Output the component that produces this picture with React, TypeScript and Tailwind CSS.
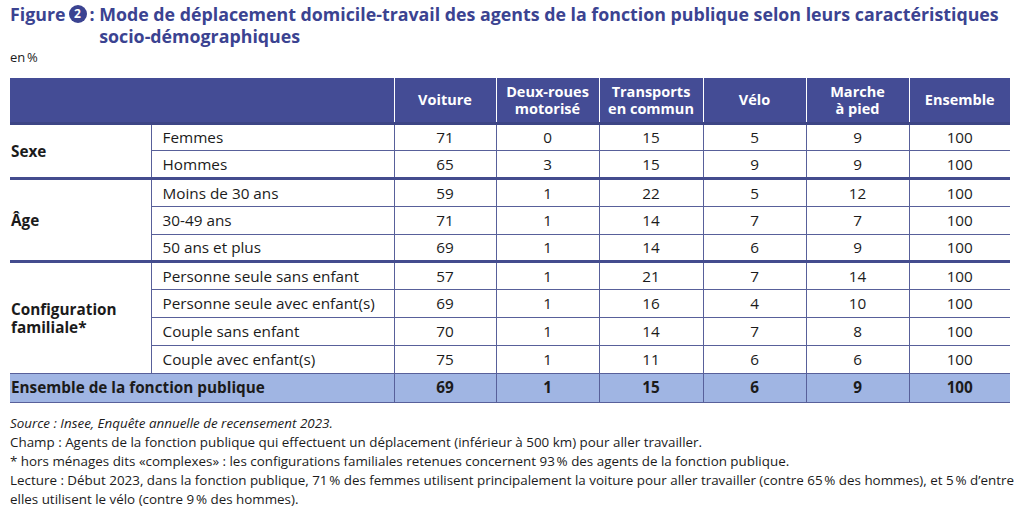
const font = "font-['Open_Sans','Lato',sans-serif]";

type Row = { label: string; values: number[] };
type Group = { name: string[]; rows: Row[] };

const groups: Group[] = [
  {
    name: ["Sexe"],
    rows: [
      { label: "Femmes", values: [71, 0, 15, 5, 9, 100] },
      { label: "Hommes", values: [65, 3, 15, 9, 9, 100] },
    ],
  },
  {
    name: ["Âge"],
    rows: [
      { label: "Moins de 30 ans", values: [59, 1, 22, 5, 12, 100] },
      { label: "30-49 ans", values: [71, 1, 14, 7, 7, 100] },
      { label: "50 ans et plus", values: [69, 1, 14, 6, 9, 100] },
    ],
  },
  {
    name: ["Configuration", "familiale*"],
    rows: [
      { label: "Personne seule sans enfant", values: [57, 1, 21, 7, 14, 100] },
      { label: "Personne seule avec enfant(s)", values: [69, 1, 16, 4, 10, 100] },
      { label: "Couple sans enfant", values: [70, 1, 14, 7, 8, 100] },
      { label: "Couple avec enfant(s)", values: [75, 1, 11, 6, 6, 100] },
    ],
  },
];

const headers = [
  ["Voiture"],
  ["Deux-roues", "motorisé"],
  ["Transports", "en commun"],
  ["Vélo"],
  ["Marche", "à pied"],
  ["Ensemble"],
];

const total = [69, 1, 15, 6, 9, 100];

// narrow no-break space before "%"
const nb = "\u202F";
const noteStar = `* hors ménages dits «complexes» : les configurations familiales retenues concernent 93${nb}% des agents de la fonction publique.`;
const noteRead = `Lecture : Début 2023, dans la fonction publique, 71${nb}% des femmes utilisent principalement la voiture pour aller travailler (contre 65${nb}% des hommes), et 5${nb}% d’entre elles utilisent le vélo (contre 9${nb}% des hommes).`;

export default function App() {
  return (
    <div className={`w-[1021px] h-[509px] bg-white text-[#1b1b1b] ${font} overflow-hidden`}>
      {/* Title */}
      <div className="flex pl-[10px] pt-[3px] text-[17.8px] font-bold leading-[22px] text-[#3b4391]">
        <div className="flex shrink-0 items-center self-start">
          Figure
          <span className="mx-[3px] inline-flex h-[18px] w-[18px] items-center justify-center rounded-full bg-[#3b4391] text-[12px] text-white">
            2
          </span>
          :&nbsp;
        </div>
        <div className="pr-[4px]">
          Mode de déplacement domicile-travail des agents de la fonction publique selon leurs caractéristiques
          socio-démographiques
        </div>
      </div>
      <div className="pl-[10px] pt-[2px] text-[13px] leading-[16px]">{`en${nb}%`}</div>

      {/* Table */}
      <table className="ml-[10px] mt-[13px] w-[1000px] table-fixed border-collapse text-[15.3px]">
        <colgroup>
          <col className="w-[141px]" />
          <col className="w-[243px]" />
          <col className="w-[102px]" />
          <col className="w-[103px]" />
          <col className="w-[104px]" />
          <col className="w-[103px]" />
          <col className="w-[103px]" />
          <col className="w-[101px]" />
        </colgroup>
        <thead>
          <tr className="h-[45px] bg-[#444c95] text-white">
            <th colSpan={2} className="border-b-[3px] border-[#3d4585]" />
            {headers.map((h, i) => (
              <th
                key={i}
                className="border-b-[3px] border-l border-b-[#3d4585] border-l-white text-[14.5px] font-bold leading-[17px]"
              >
                {h.map((l) => (
                  <div key={l}>{l}</div>
                ))}
              </th>
            ))}
          </tr>
        </thead>
        <tbody>
          {groups.map((g, gi) =>
            g.rows.map((r, i) => {
              const thick = i === g.rows.length - 1 && gi < groups.length - 1;
              const b = thick ? "border-b-[3px] border-b-[#444c8e]" : "border-b border-b-[#58609a]";
              return (
                <tr key={r.label} className="h-[27.8px]">
                  {i === 0 && (
                    <td
                      rowSpan={g.rows.length}
                      className={`${gi < groups.length - 1 ? "border-b-[3px] border-b-[#444c8e]" : "border-b border-b-[#58609a]"} pl-[1px] align-middle font-bold leading-[18px]`}
                    >
                      {g.name.map((n) => (
                        <div key={n}>{n}</div>
                      ))}
                    </td>
                  )}
                  <td className={`${b} border-l border-l-[#58609a] pl-[11px]`}>{r.label}</td>
                  {r.values.map((v, j) => (
                    <td key={j} className={`${b} border-l border-l-[#58609a] text-center`}>
                      {v}
                    </td>
                  ))}
                </tr>
              );
            })
          )}
          <tr className="h-[29px] bg-[#a0b5e3] font-bold">
            <td colSpan={2} className="border-b border-b-[#58609a] pl-[1px]">
              Ensemble de la fonction publique
            </td>
            {total.map((v, j) => (
              <td key={j} className="border-b border-l border-[#58609a] text-center">
                {v}
              </td>
            ))}
          </tr>
        </tbody>
      </table>

      {/* Notes */}
      <div className="pl-[10px] pt-[11px] text-[13.4px] leading-[19px]">
        <div className="italic">Source : Insee, Enquête annuelle de recensement 2023.</div>
        <div>
          Champ : Agents de la fonction publique qui effectuent un déplacement (inférieur à 500 km) pour aller
          travailler.
        </div>
        <div>{noteStar}</div>
        <div className="w-[1008px]">{noteRead}</div>
      </div>
    </div>
  );
}
